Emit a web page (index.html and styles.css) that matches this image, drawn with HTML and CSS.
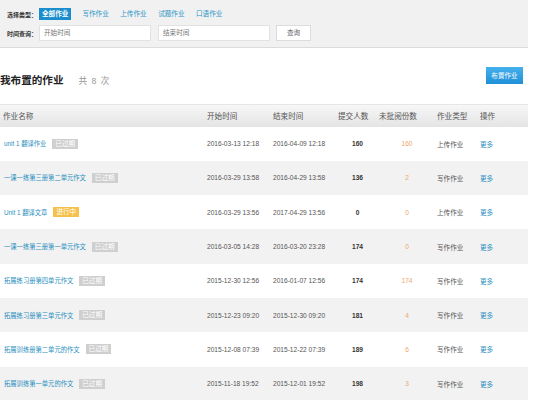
FILE: index.html
```html
<!DOCTYPE html>
<html lang="zh">
<head>
<meta charset="utf-8">
<link rel="stylesheet" href="styles.css">
</head>
<body>
<div class="page">
  <div class="filter">
    <div class="frow">
      <span class="flabel">选择类型：</span>
      <span class="tab active">全部作业</span>
      <span class="tab">写作作业</span>
      <span class="tab">上传作业</span>
      <span class="tab">试题作业</span>
      <span class="tab">口语作业</span>
    </div>
    <div class="frow">
      <span class="flabel">时间查询：</span>
      <span class="input">开始时间</span>
      <span class="input">结束时间</span>
      <span class="qbtn">查询</span>
    </div>
  </div>

  <div class="head">
    <div class="title">我布置的作业<span class="count">共 8 次</span></div>
    <span class="addbtn">布置作业</span>
  </div>

  <div class="table">
    <div class="tr th">
      <div class="c">作业名称</div>
      <div class="c">开始时间</div>
      <div class="c">结束时间</div>
      <div class="c">提交人数</div>
      <div class="c">未批阅份数</div>
      <div class="c">作业类型</div>
      <div class="c">操作</div>
    </div>
    <div class="tr">
      <div class="c name"><a>unit 1 翻译作业</a><span class="badge">已过期</span></div>
      <div class="c">2016-03-13 12:18</div>
      <div class="c">2016-04-09 12:18</div>
      <div class="c num">160</div>
      <div class="c un">160</div>
      <div class="c">上传作业</div>
      <div class="c"><a>更多</a></div>
    </div>
    <div class="tr alt">
      <div class="c name"><a>一课一练第三册第二单元作文</a><span class="badge">已过期</span></div>
      <div class="c">2016-03-29 13:58</div>
      <div class="c">2016-04-29 13:58</div>
      <div class="c num">136</div>
      <div class="c un">2</div>
      <div class="c">写作作业</div>
      <div class="c"><a>更多</a></div>
    </div>
    <div class="tr">
      <div class="c name"><a>Unit 1 翻译文章</a><span class="badge going">进行中</span></div>
      <div class="c">2016-03-29 13:56</div>
      <div class="c">2017-04-29 13:56</div>
      <div class="c num">0</div>
      <div class="c un">0</div>
      <div class="c">上传作业</div>
      <div class="c"><a>更多</a></div>
    </div>
    <div class="tr alt">
      <div class="c name"><a>一课一练第三册第一单元作文</a><span class="badge">已过期</span></div>
      <div class="c">2016-03-05 14:28</div>
      <div class="c">2016-03-20 23:28</div>
      <div class="c num">174</div>
      <div class="c un">0</div>
      <div class="c">写作作业</div>
      <div class="c"><a>更多</a></div>
    </div>
    <div class="tr">
      <div class="c name"><a>拓展练习册第四单元作文</a><span class="badge">已过期</span></div>
      <div class="c">2015-12-30 12:56</div>
      <div class="c">2016-01-07 12:56</div>
      <div class="c num">174</div>
      <div class="c un">174</div>
      <div class="c">写作作业</div>
      <div class="c"><a>更多</a></div>
    </div>
    <div class="tr alt">
      <div class="c name"><a>拓展练习册第三单元作文</a><span class="badge">已过期</span></div>
      <div class="c">2015-12-23 09:20</div>
      <div class="c">2015-12-30 09:20</div>
      <div class="c num">181</div>
      <div class="c un">4</div>
      <div class="c">写作作业</div>
      <div class="c"><a>更多</a></div>
    </div>
    <div class="tr">
      <div class="c name"><a>拓展训练册第二单元的作文</a><span class="badge">已过期</span></div>
      <div class="c">2015-12-08 07:39</div>
      <div class="c">2015-12-22 07:39</div>
      <div class="c num">189</div>
      <div class="c un">6</div>
      <div class="c">写作作业</div>
      <div class="c"><a>更多</a></div>
    </div>
    <div class="tr alt">
      <div class="c name"><a>拓展训练第一单元的作文</a><span class="badge">已过期</span></div>
      <div class="c">2015-11-18 19:52</div>
      <div class="c">2015-12-01 19:52</div>
      <div class="c num">198</div>
      <div class="c un">3</div>
      <div class="c">写作作业</div>
      <div class="c"><a>更多</a></div>
    </div>
  </div>
</div>
</body>
</html>
```

FILE: styles.css
```css
html, body {
  margin: 0;
  padding: 0;
  background: #ffffff;
}
body {
  font-family: "Liberation Sans", "Noto Sans CJK SC", sans-serif;
  font-size: 6.6px;
  color: #555;
}
.page {
  width: 528px;
}
.filter {
  height: 48px;
  box-sizing: border-box;
  background: #f1f1f1;
  border-bottom: 1px solid #dcdcdc;
  padding: 8px 0 0 7px;
  display: flex;
  flex-direction: column;
  gap: 5px;
}
.frow {
  display: flex;
  align-items: center;
}
.flabel {
  color: #333;
  font-weight: bold;
  font-size: 6px;
  white-space: nowrap;
  margin-right: 2px;
}
.tab {
  color: #2a96c8;
  margin-right: 11.5px;
  line-height: 12px;
  white-space: nowrap;
}
.tab.active {
  background: #1a8dcd;
  color: #fff;
  font-weight: bold;
  padding: 0 3px;
  margin-right: 11px;
}
.input {
  width: 112px;
  height: 16px;
  box-sizing: border-box;
  background: #fff;
  border: 1px solid #e2e2e2;
  color: #777;
  padding-left: 4px;
  line-height: 14px;
  margin-right: 7px;
  white-space: nowrap;
}
.qbtn {
  width: 35px;
  height: 16px;
  box-sizing: border-box;
  background: #fff;
  border: 1px solid #dcdcdc;
  color: #666;
  text-align: center;
  line-height: 14px;
  margin-left: -1px;
}
.head {
  display: flex;
  justify-content: space-between;
  align-items: flex-start;
  padding-top: 19px;
  height: 38px;
  box-sizing: border-box;
  margin-bottom: 18px;
}
.title {
  font-size: 10.6px;
  font-weight: bold;
  color: #222;
  padding-top: 7px;
  line-height: 12px;
}
.count {
  font-size: 8.6px;
  font-weight: normal;
  color: #999;
  margin-left: 15px;
  word-spacing: 2px;
}
.addbtn {
  width: 37px;
  height: 17px;
  margin-right: 5px;
  background: linear-gradient(#45b0ec, #1f8fd8);
  color: #fff;
  text-align: center;
  line-height: 17px;
  font-size: 6.6px;
}
.table {
  width: 528px;
}
.tr {
  display: grid;
  grid-template-columns: 204px 66px 65px 41px 58px 43px 51px;
  height: 34.3px;
  align-items: center;
  background: #fff;
}
.tr.alt {
  background: #f2f2f2;
}
.tr.th {
  height: 22.5px;
  background: linear-gradient(#f7f7f7, #e4e4e4);
  border-top: 1px solid #e6e6e6;
  box-sizing: border-box;
  font-size: 7.6px;
  color: #555;
}
.c {
  padding-left: 3px;
  white-space: nowrap;
}
.name {
  padding-left: 4px;
  display: flex;
  align-items: center;
}
.name a {
  font-size: 6.3px;
}
a {
  color: #2a8fc0;
}
.badge {
  display: inline-block;
  background: #cfcfcf;
  color: #fff;
  height: 10px;
  line-height: 10px;
  padding: 0 3px;
  margin-left: 6px;
}
.badge.going {
  background: #f5c14a;
}
.num {
  text-align: center;
  padding-left: 4px;
  font-weight: bold;
  color: #333;
}
.un {
  text-align: center;
  padding-left: 4px;
  color: #f0a56a;
}
```
